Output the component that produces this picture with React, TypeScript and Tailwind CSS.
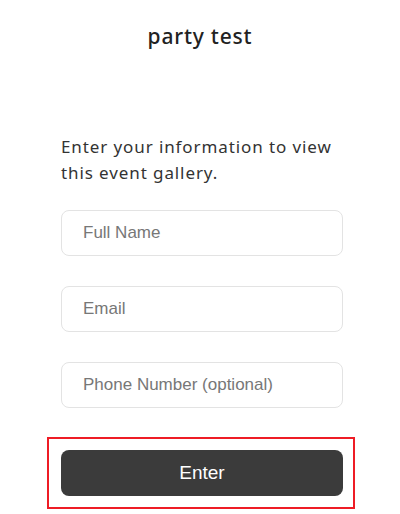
import React from "react";

export default function App() {
  return (
    <div className="w-[400px] h-[514px] bg-white overflow-hidden">
      <div className="pt-[22px] text-center text-[21px] font-medium text-[#222] leading-[28px] tracking-[0.8px]" style={{ fontFamily: "'Noto Sans', sans-serif" }}>
        party test
      </div>
      <div className="ml-[61px] w-[290px]">
        <p className="mt-[84px] text-[17px] leading-[26px] text-[#333] tracking-[0.9px]" style={{ fontFamily: "'Noto Sans', sans-serif" }}>
          Enter your information to view this event gallery.
        </p>
        <div className="mt-[24px] w-[282px] flex flex-col gap-[30px]" style={{ fontFamily: "'Liberation Sans', Arial, sans-serif" }}>
          <input className="h-[46px] w-full rounded-[8px] border border-[#e3e3e3] pl-[21px] text-[17px] placeholder:text-[#777] outline-none" placeholder="Full Name" />
          <input className="h-[46px] w-full rounded-[8px] border border-[#e3e3e3] pl-[21px] text-[17px] placeholder:text-[#777] outline-none" placeholder="Email" />
          <input className="h-[46px] w-full rounded-[8px] border border-[#e3e3e3] pl-[21px] text-[17px] placeholder:text-[#777] outline-none" placeholder="Phone Number (optional)" />
        </div>
      </div>
      <div className="ml-[47px] mt-[29px] w-[308px] h-[72px] border-2 border-[#ee1c25] pt-[11px] pl-[12px]">
        <button className="h-[46px] w-[282px] rounded-[8px] bg-[#3b3b3b] text-white text-[19px]" style={{ fontFamily: "'Liberation Sans', Arial, sans-serif" }}>
          Enter
        </button>
      </div>
    </div>
  );
}
